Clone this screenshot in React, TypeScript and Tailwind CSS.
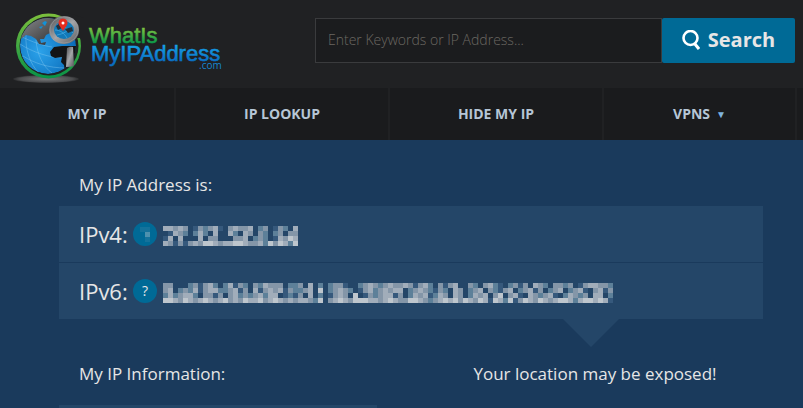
import type { ReactNode } from 'react';

const navItems = [
  { label: 'MY IP', href: '#my-ip' },
  { label: 'IP LOOKUP', href: '#ip-lookup' },
  { label: 'HIDE MY IP', href: '#hide-my-ip' },
  { label: 'VPNS', href: '#vpns', menu: true },
];

// Brightness of each mosaic block, 0 is empty and 5 the lightest.
const ipv4Blocks = [
  '443430132341034334023013204',
  '014320242040042043032023033',
  '140400040330003340232014354',
  '431313435543445543342535425',
];

const ipv6Blocks = [
  '330002313420241320324333022304020233100234323433431342031340032034210231304320332301344332',
  '340232413442234130413434132234050234320134234344023432132043023403213402341302340234103413',
  '242344203313034232342440121304020134305013234413024341243043024340350341043234102432304402',
  '554354345434534354453454343443250345435554434543355432345453543541542513543543455424554541',
];

const shades = ['none', '#36597c', '#5d8099', '#8496a8', '#a1adba', '#bec6cd'];

function Mosaic({ rows, label }: { rows: string[]; label: string }) {
  const width = rows[0].length * 5;
  return (
    <svg
      role="img"
      aria-label={label}
      width={width}
      height="20"
      viewBox={`0 0 ${width} 20`}
      shapeRendering="crispEdges"
      className="shrink-0"
    >
      {rows.map((row, y) =>
        row
          .split('')
          .map((level, x) => (
            <rect
              key={`${x}-${y}`}
              x={x * 5}
              y={y * 5}
              width="5"
              height="5"
              fill={shades[Number(level)]}
            />
          ))
      )}
    </svg>
  );
}

function Logo() {
  return (
    <svg width="215" height="88" viewBox="0 0 215 88" aria-label="WhatIsMyIPAddress.com">
      <defs>
        <linearGradient id="ring" x1="0" y1="0" x2="0" y2="1">
          <stop offset="0" stopColor="#7cbf3c" />
          <stop offset="1" stopColor="#079247" />
        </linearGradient>
        <radialGradient id="sea" cx=".35" cy=".6" r=".7">
          <stop offset="0" stopColor="#2ba2ea" />
          <stop offset="1" stopColor="#0868b6" />
        </radialGradient>
        <linearGradient id="land" x1="0" y1="0" x2="1" y2="1">
          <stop offset="0" stopColor="#8b8c8f" />
          <stop offset="1" stopColor="#2b2c2e" />
        </linearGradient>
        <linearGradient id="steel" x1="0" y1="0" x2="1" y2="1">
          <stop offset="0" stopColor="#4b4c4f" />
          <stop offset=".5" stopColor="#a5a6a9" />
          <stop offset="1" stopColor="#56575a" />
        </linearGradient>
        <radialGradient id="shadow">
          <stop offset="0" stopColor="#77787a" />
          <stop offset=".8" stopColor="#4c4d4f" />
          <stop offset="1" stopColor="#2b2c2e" />
        </radialGradient>
        <linearGradient id="green" x1="0" y1="0" x2="0" y2="1">
          <stop offset="0.2" stopColor="#7fc241" />
          <stop offset="0.8" stopColor="#0a9a49" />
        </linearGradient>
        <linearGradient id="blue" x1="0" y1="0" x2="0" y2="1">
          <stop offset="0.2" stopColor="#16a0e6" />
          <stop offset="0.8" stopColor="#0a6fc4" />
        </linearGradient>
        <clipPath id="globe">
          <circle cx="36" cy="46" r="28" />
        </clipPath>
      </defs>
      <ellipse cx="34" cy="79" rx="33" ry="4" fill="url(#shadow)" />
      <circle cx="36.500" cy="46" r="32.500" fill="url(#ring)" />
      <circle cx="37" cy="46" r="29.500" fill="#202123" />
      <path d="M50 11L72 18L72 38L50 38Z" fill="#202123" />
      <g clipPath="url(#globe)">
        <circle cx="36" cy="46" r="28" fill="url(#sea)" />
        <g fill="none" stroke="#8accf2" strokeWidth="0.5" opacity=".8">
          <path d="M8 44C20 52 38 58 52 58M11 56C22 63 36 68 54 68M14 34C13 50 18 64 27 73M24 40C25 54 31 67 40 73M8 36C20 42 32 46 40 47" />
        </g>
        <path
          d="M8 36C11 26 22 17 36 17L46 20L40 27L38 33L34 35L32 39L28 39L29 43L34 42L33 45L27 44L24 39L19 36L14 35L9 39Z"
          fill="url(#land)"
        />
        <path d="M30 23L33 21L35 22L33 26ZM27 27L31 26L29 29Z" fill="#1292d8" />
        <path
          d="M38 52L42 47L50 46L66 46L66 73L53 73L52 65L49 62L50 57L43 58L39 56Z"
          fill="#131416"
        />
      </g>
      <path d="M55 48Q58 46 61 47L62 66Q58 67 54 67Z" fill="url(#steel)" />
      <ellipse cx="52" cy="30" rx="15" ry="14" fill="url(#steel)" />
      <ellipse cx="52" cy="30" rx="14" ry="13" fill="none" stroke="#98999c" strokeWidth=".7" />
      <ellipse cx="52" cy="30" rx="10" ry="9" fill="#1279b8" />
      <path d="M43 30C48 30 52 33 55 38M45 25C52 26 58 30 61 33M45 35C51 34 56 31 60 27" fill="none" stroke="#45aee6" strokeWidth=".7" />
      <path d="M44 26L48 23L50 28L46 30ZM53 29L60 27L61 31L56 33Z" fill="#24303a" />
      <path d="M51 31L47 25A4.500 4.500 0 1 1 55 25Z" fill="#e42d20" />
      <circle cx="51" cy="23" r="1.500" fill="#fff" />
      <g className="font-['Liberation_Sans',sans-serif]">
        <text x="77" y="43" fontSize="22" fill="url(#green)" stroke="url(#green)" strokeWidth=".6">
          WhatIs
        </text>
        <text x="79" y="61" fontSize="22" fill="url(#blue)" stroke="url(#blue)" strokeWidth=".6">
          MyIPAddress
        </text>
      </g>
      <text x="187" y="69" fontSize="10" fill="#1687cf" className="font-['Open_Sans',sans-serif]">
        .com
      </text>
    </svg>
  );
}

function IpRow({ label, badge, children }: { label: string; badge: ReactNode; children: ReactNode }) {
  return (
    <div className="flex h-14 items-center bg-[#244668] pl-5">
      <span className="w-[54px] text-[22px]">{label}</span>
      {badge}
      <div className="pt-1">{children}</div>
    </div>
  );
}

export default function App() {
  return (
    <div className="flex min-h-screen flex-col bg-[#1a3a5c] font-['Open_Sans',sans-serif] text-[#e6e6e6]">
      <header className="flex h-[88px] items-center bg-[#202123] pr-2">
        <a href="#home" className="w-[315px] shrink-0 pl-3">
          <Logo />
        </a>
        <form className="mb-2 flex h-[45px] flex-1" onSubmit={(e) => e.preventDefault()}>
          <input
            type="text"
            aria-label="Search"
            placeholder="Enter Keywords or IP Address..."
            className="min-w-0 flex-1 border border-[#3a3b3d] bg-[#1b1c1e] px-3 text-sm font-light outline-none placeholder:text-[#6b6862]"
          />
          <button
            type="submit"
            className="flex w-[133px] items-center justify-center gap-2 rounded-xs bg-[#006a96] text-xl font-bold"
          >
            <svg width="18" height="20" viewBox="0 0 18 20" fill="none" stroke="#fff" strokeWidth="2.600">
              <circle cx="8.500" cy="8" r="7" />
              <path d="M12.500 13.500L17 19" strokeWidth="3" />
            </svg>
            Search
          </button>
        </form>
      </header>

      <nav className="grid h-[52px] grid-cols-[176fr_214fr_214fr_193fr_6fr] bg-[#1a1b1d] text-sm font-bold text-[#b6c6d6]">
        {navItems.map((item) => (
          <a
            key={item.label}
            href={item.href}
            className="flex items-center justify-center gap-1.5 border-r-2 border-[#202123]"
          >
            {item.label}
            {item.menu && <span className="text-[10px] text-[#7fb4de]">▼</span>}
          </a>
        ))}
      </nav>

      <main className="flex flex-1 flex-col pr-10 pl-[59px]">
        <h1 className="px-5 pt-8 pb-2 text-[17px] leading-[26px]">My IP Address is:</h1>
        <section className="flex flex-col gap-px">
          <IpRow
            label="IPv4:"
            badge={
              <button
                type="button"
                aria-label="About IPv4"
                className="mr-1.5 flex size-6 items-center justify-center rounded-full bg-[#006a96]"
              >
                <svg width="10" height="15" viewBox="0 0 10 15" shapeRendering="crispEdges">
                  <path d="M0 0h10v15H5V5H0z" fill="#14729b" />
                  <path d="M5 5h5v5H5z" fill="#4d91ae" />
                </svg>
              </button>
            }
          >
            <Mosaic rows={ipv4Blocks} label="IPv4 address, hidden" />
          </IpRow>
          <IpRow
            label="IPv6:"
            badge={
              <button
                type="button"
                aria-label="About IPv6"
                className="mr-1.5 flex size-6 items-center justify-center rounded-full bg-[#006a96] text-sm"
              >
                ?
              </button>
            }
          >
            <Mosaic rows={ipv6Blocks} label="IPv6 address, hidden" />
          </IpRow>
        </section>
        <div className="grid flex-1 grid-cols-[318fr_344fr] grid-rows-[28px_54px_1fr] gap-x-[42px]">
          <div className="col-start-2 h-7 w-14 justify-self-center bg-[#244668] [clip-path:polygon(0_0,100%_0,50%_100%)]" />
          <h2 className="col-start-1 row-start-2 self-center px-5 text-[17px]">My IP Information:</h2>
          <p className="row-start-2 self-center pl-2 text-center text-[17px]">
            Your location may be exposed!
          </p>
          <div className="col-start-1 row-start-3 mt-1 bg-[#244668]" />
        </div>
      </main>
    </div>
  );
}
